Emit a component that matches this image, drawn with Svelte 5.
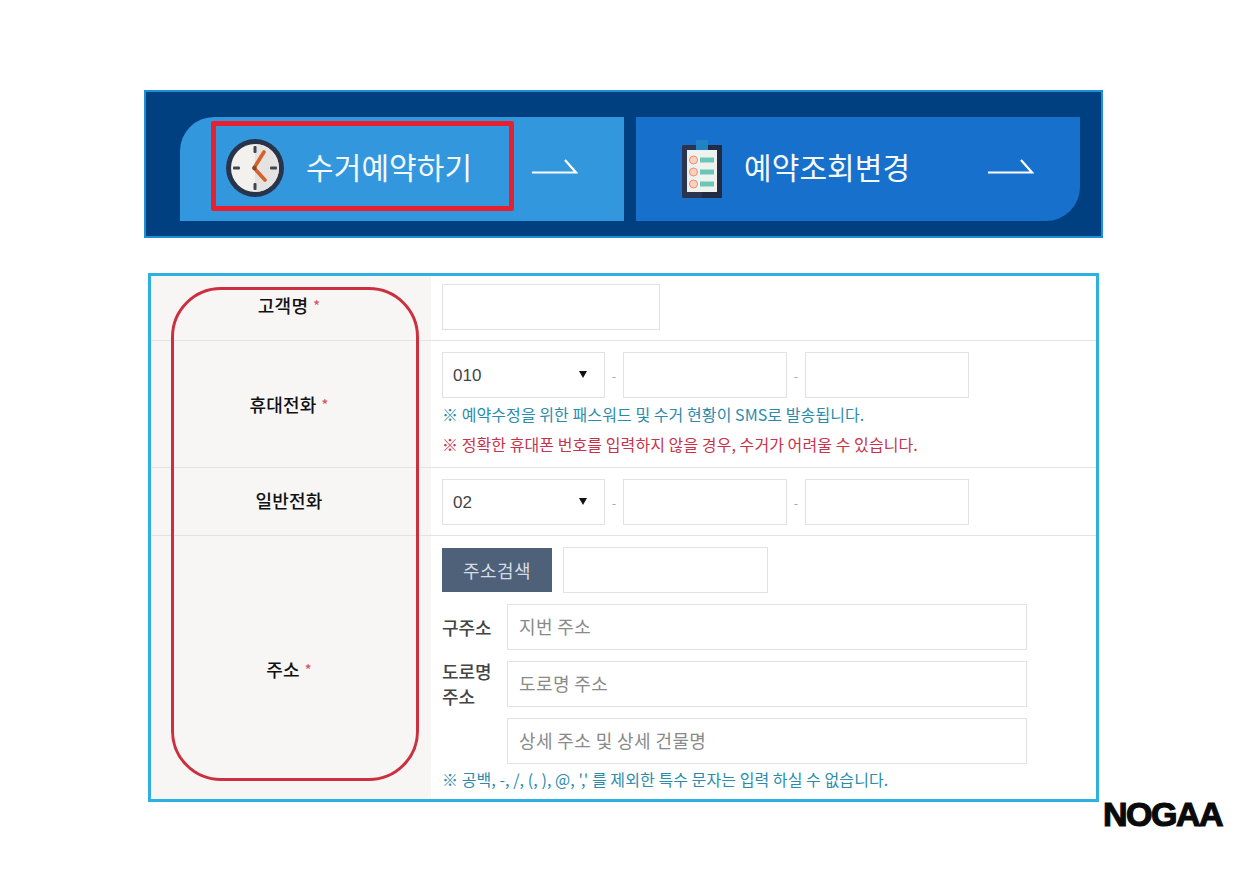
<script>
  const tabs = [
    { label: '수거예약하기', kind: 'clock' },
    { label: '예약조회변경', kind: 'board' }
  ];
  const ticks = [0, 90, 180, 270];
  const marks = [0, 1, 2];
</script>

<main class="page">
  <nav class="banner">
    {#each tabs as tab, i}
      <a class="tab" class:first={i === 0} class:second={i === 1} href="#top">
        {#if tab.kind === 'clock'}
          <svg class="clock" viewBox="0 0 58 58" aria-hidden="true">
            <circle cx="29" cy="29" r="29" fill="#28344c" />
            <circle cx="29" cy="29" r="24" fill="#f2f1ee" />
            <path d="M29 5a24 24 0 0 1 0 48z" fill="#e4e3df" />
            {#each ticks as t}
              <rect x="27.5" y="7" width="3" height="7" rx="1" fill="#3e4655" transform="rotate({t} 29 29)" />
            {/each}
            <path d="M38 13 L28 29 L39 41" fill="none" stroke="#d4622a" stroke-width="3.6" stroke-linecap="round" stroke-linejoin="round" />
            <circle cx="28.5" cy="29" r="2.2" fill="#7a4a38" />
          </svg>
        {:else}
          <svg class="board" viewBox="0 0 40 58" aria-hidden="true">
            <rect x="0" y="5" width="40" height="53" rx="1.5" fill="#2c3550" />
            <rect x="20" y="5" width="20" height="53" fill="#232b44" />
            <rect x="5" y="10" width="30" height="42" fill="#eef3f0" />
            <path d="M14 0h12v10h-12z" fill="#1f83c4" />
            {#each marks as m}
              <circle cx="11.5" cy={20 + m * 12} r="4" fill="#f8d2c0" stroke="#ea8f6e" stroke-width="1" />
              <rect x="18" y={17.5 + m * 12} width="14" height="5" fill="#6cc5b6" />
            {/each}
          </svg>
        {/if}
        <span class="tab-label">{tab.label}</span>
        <svg class="arrow" viewBox="0 0 46 16" aria-hidden="true">
          <path d="M0 14.5H44L33 2" fill="none" stroke="#fff" stroke-width="2.2" />
        </svg>
        {#if i === 0}<span class="red-box"></span>{/if}
      </a>
    {/each}
  </nav>

  <form class="form">
    <div class="row row-name">
      <div class="label">고객명 <em>*</em></div>
      <div class="cell"><input class="w-name" type="text" /></div>
    </div>

    <div class="row row-mobile">
      <div class="label">휴대전화 <em>*</em></div>
      <div class="cell">
        <div class="phone">
          <div class="select"><select><option>010</option></select></div>
          <span class="dash">-</span><input class="w-part" type="text" />
          <span class="dash">-</span><input class="w-part" type="text" />
        </div>
        <p class="note blue first-note">※ 예약수정을 위한 패스워드 및 수거 현황이 SMS로 발송됩니다.</p>
        <p class="note red">※ 정확한 휴대폰 번호를 입력하지 않을 경우, 수거가 어려울 수 있습니다.</p>
      </div>
    </div>

    <div class="row row-phone">
      <div class="label">일반전화</div>
      <div class="cell">
        <div class="phone">
          <div class="select"><select><option>02</option></select></div>
          <span class="dash">-</span><input class="w-part" type="text" />
          <span class="dash">-</span><input class="w-part" type="text" />
        </div>
      </div>
    </div>

    <div class="row row-addr">
      <div class="label addr-label">주소 <em>*</em></div>
      <div class="cell">
        <div class="search">
          <button type="button">주소검색</button>
          <input class="w-zip" type="text" />
        </div>
        <div class="addr-grid">
          <span class="addr-name">구주소</span>
          <input type="text" placeholder="지번 주소" />
          <span class="addr-name">도로명<br />주소</span>
          <input type="text" placeholder="도로명 주소" />
          <span></span>
          <input type="text" placeholder="상세 주소 및 상세 건물명" />
        </div>
        <p class="note blue last-note">※ 공백, -, /, (, ), @, ',' 를 제외한 특수 문자는 입력 하실 수 없습니다.</p>
      </div>
    </div>

    <span class="oval"></span>
  </form>

  <div class="logo">NOGAA</div>
</main>

<style>
  :global(body) {
    margin: 0;
    background: #fff;
  }

  .page {
    width: 1260px;
    height: 891px;
    box-sizing: border-box;
    padding-top: 90px;
    display: flex;
    flex-direction: column;
    font-family: "Noto Sans CJK KR", "Liberation Sans", sans-serif;
    overflow: hidden;
  }

  .banner {
    box-sizing: border-box;
    width: 959px;
    height: 148px;
    margin-left: 144px;
    padding: 25px 21px 15px 34px;
    display: flex;
    gap: 12px;
    background: #003f80;
    border: 2px solid #1d8fd6;
  }

  .tab {
    position: relative;
    box-sizing: border-box;
    width: 444px;
    height: 104px;
    padding: 0 46px;
    display: flex;
    align-items: center;
    text-decoration: none;
    color: #f4f9fd;
  }

  .first {
    background: #3397de;
    border-top-left-radius: 34px;
  }

  .second {
    background: #1770cc;
    border-bottom-right-radius: 34px;
  }

  .clock {
    width: 58px;
    height: 58px;
    margin-top: -2px;
  }

  .board {
    width: 40px;
    height: 58px;
  }

  .tab-label {
    margin-left: 22px;
    margin-top: -6px;
    font-size: 30px;
    line-height: 1;
    letter-spacing: 0.1px;
    font-weight: 400;
  }

  .arrow {
    width: 46px;
    height: 16px;
    margin-left: auto;
    margin-top: -7px;
    flex: none;
  }

  .red-box {
    position: absolute;
    left: 31px;
    top: 4px;
    width: 303px;
    height: 90px;
    box-sizing: border-box;
    border: 5px solid #e7202f;
    border-radius: 2px;
  }

  .form {
    position: relative;
    box-sizing: border-box;
    width: 951px;
    height: 529px;
    margin: 35px 0 0 148px;
    border: 3px solid #2db0e2;
    background: #fff;
  }

  .row {
    display: grid;
    grid-template-columns: 280px 1fr;
    border-bottom: 1px solid #e3e3e3;
    box-sizing: border-box;
  }

  .row-name { height: 65px; }
  .row-mobile { height: 127px; }
  .row-phone { height: 68px; }
  .row-addr { height: 263px; border-bottom: 0; }

  .label {
    background: #f7f6f5;
    display: flex;
    align-items: center;
    justify-content: center;
    gap: 5px;
    padding: 0 4px 0 0;
    font-size: 18px;
    font-weight: 500;
    color: #111;
    letter-spacing: 0.2px;
  }

  .row-name .label { padding-bottom: 6px; }
  .row-phone .label { padding-bottom: 3px; }
  .addr-label { padding-top: 3px; }

  .label em {
    font-style: normal;
    font-size: 14px;
    color: #d9536a;
  }

  .cell {
    padding: 8px 0 0 11px;
  }

  .row-mobile .cell { padding-top: 11px; }
  .row-phone .cell { padding-top: 11px; }
  .row-addr .cell { padding-top: 11px; }

  input,
  select {
    box-sizing: border-box;
    height: 46px;
    margin: 0;
    border: 1px solid #e2e2e2;
    border-radius: 0;
    background: #fff;
    font-family: inherit;
    font-size: 18px;
    color: #444;
    outline: 0;
  }

  input {
    padding: 0 11px 2px;
    display: block;
  }

  input::placeholder {
    color: #8a8a8a;
    opacity: 1;
    letter-spacing: 0.4px;
  }

  .w-name { width: 218px; }
  .w-part { width: 164px; }
  .w-zip { width: 205px; }

  .phone {
    display: flex;
    align-items: center;
  }

  .select {
    position: relative;
    width: 163px;
  }

  .select::after {
    content: "";
    position: absolute;
    right: 18px;
    top: 19px;
    border-left: 4.5px solid transparent;
    border-right: 4.5px solid transparent;
    border-top: 7px solid #111;
  }

  select {
    display: block;
    width: 100%;
    padding: 0 10px;
    appearance: none;
    font-family: "Liberation Sans", sans-serif;
    font-size: 17px;
  }

  .dash {
    width: 18px;
    text-align: center;
    font-size: 13px;
    color: #aaa;
  }

  .note {
    margin: 0;
    font-size: 16px;
    line-height: 20px;
    letter-spacing: 0.07px;
    white-space: nowrap;
  }

  .blue { color: #2a8cab; }
  .red { color: #c8324a; }
  .first-note { margin-top: 6px; }
  .first-note + .note { margin-top: 10px; }
  .last-note { margin-top: 5px; }

  .search {
    display: flex;
    align-items: center;
    gap: 11px;
  }

  button {
    width: 110px;
    height: 44px;
    padding: 0;
    border: 0;
    background: #4f6079;
    color: #d6dce4;
    font-family: inherit;
    font-size: 18px;
    letter-spacing: 0.4px;
  }

  .addr-grid {
    display: grid;
    grid-template-columns: 65px 520px;
    grid-auto-rows: 46px;
    gap: 11px 0;
    margin-top: 11px;
    align-items: center;
  }

  .addr-name {
    font-size: 18px;
    line-height: 25px;
    font-weight: 500;
    color: #444;
  }

  .oval {
    position: absolute;
    left: 20px;
    top: 11px;
    width: 248px;
    height: 494px;
    box-sizing: border-box;
    border: 3px solid #cc2f3d;
    border-radius: 50px;
    pointer-events: none;
  }

  .logo {
    align-self: flex-end;
    margin: -3px 38px 0 0;
    font-family: "Liberation Sans", sans-serif;
    font-size: 34px;
    line-height: 31px;
    font-weight: 700;
    color: #0a0a0a;
    -webkit-text-stroke: 1.2px #0a0a0a;
    letter-spacing: -1.5px;
  }
</style>
